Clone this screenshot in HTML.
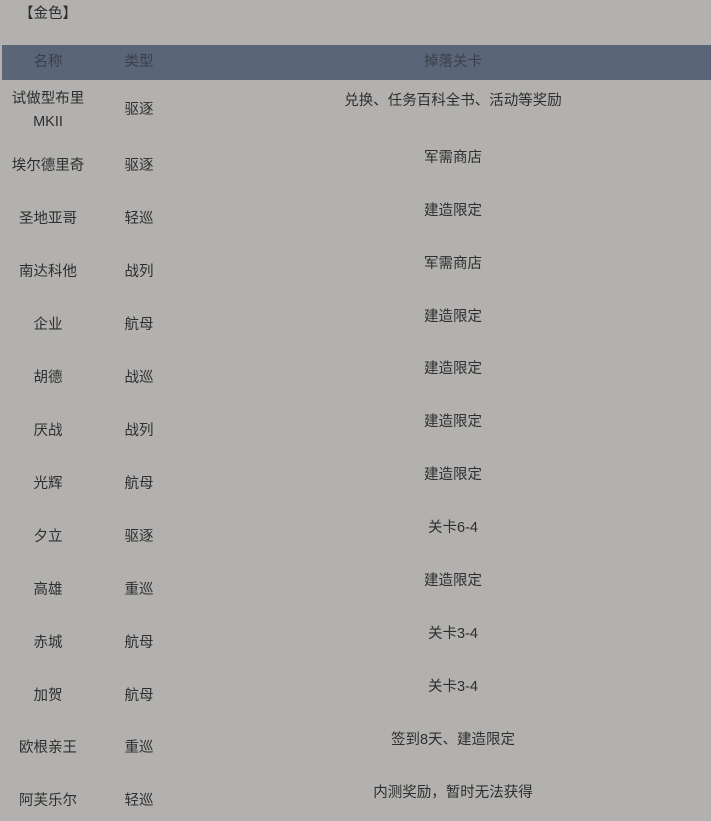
<!DOCTYPE html>
<html><head><meta charset="utf-8"><style>
body{margin:0;width:711px;height:821px;background:#b3b1af;overflow:hidden;font-family:"Liberation Sans","Noto Sans CJK SC",sans-serif;font-size:14.5px;color:#2e2e2e;position:relative}
.t{position:absolute;white-space:nowrap;transform:translate(-50%,-50%);line-height:1}
.hd{position:absolute;left:2px;top:45px;width:709px;height:35px;background:#5a6577}
.h{color:#3a414c}
</style></head><body>
<div class="t" style="left:48px;top:14px">【金色】</div>
<div class="hd"></div>
<div class="t h" style="left:48px;top:62px">名称</div>
<div class="t h" style="left:139px;top:62px">类型</div>
<div class="t h" style="left:453px;top:62px">掉落关卡</div>

<div class="t" style="left:48px;top:99px">试做型布里</div>
<div class="t" style="left:48px;top:122px">MKII</div>
<div class="t" style="left:139px;top:110px">驱逐</div>
<div class="t" style="left:453px;top:101px">兑换、任务百科全书、活动等奖励</div>

<div class="t" style="left:48px;top:166px">埃尔德里奇</div><div class="t" style="left:139px;top:166px">驱逐</div><div class="t" style="left:453px;top:158px">军需商店</div>
<div class="t" style="left:48px;top:219px">圣地亚哥</div><div class="t" style="left:139px;top:219px">轻巡</div><div class="t" style="left:453px;top:211px">建造限定</div>
<div class="t" style="left:48px;top:272px">南达科他</div><div class="t" style="left:139px;top:272px">战列</div><div class="t" style="left:453px;top:264px">军需商店</div>
<div class="t" style="left:48px;top:325px">企业</div><div class="t" style="left:139px;top:325px">航母</div><div class="t" style="left:453px;top:317px">建造限定</div>
<div class="t" style="left:48px;top:378px">胡德</div><div class="t" style="left:139px;top:378px">战巡</div><div class="t" style="left:453px;top:369px">建造限定</div>
<div class="t" style="left:48px;top:431px">厌战</div><div class="t" style="left:139px;top:431px">战列</div><div class="t" style="left:453px;top:422px">建造限定</div>
<div class="t" style="left:48px;top:484px">光辉</div><div class="t" style="left:139px;top:484px">航母</div><div class="t" style="left:453px;top:475px">建造限定</div>
<div class="t" style="left:48px;top:537px">夕立</div><div class="t" style="left:139px;top:537px">驱逐</div><div class="t" style="left:453px;top:528px">关卡6-4</div>
<div class="t" style="left:48px;top:590px">高雄</div><div class="t" style="left:139px;top:590px">重巡</div><div class="t" style="left:453px;top:581px">建造限定</div>
<div class="t" style="left:48px;top:643px">赤城</div><div class="t" style="left:139px;top:643px">航母</div><div class="t" style="left:453px;top:634px">关卡3-4</div>
<div class="t" style="left:48px;top:696px">加贺</div><div class="t" style="left:139px;top:696px">航母</div><div class="t" style="left:453px;top:687px">关卡3-4</div>
<div class="t" style="left:48px;top:748px">欧根亲王</div><div class="t" style="left:139px;top:748px">重巡</div><div class="t" style="left:453px;top:740px">签到8天、建造限定</div>
<div class="t" style="left:48px;top:801px">阿芙乐尔</div><div class="t" style="left:139px;top:801px">轻巡</div><div class="t" style="left:453px;top:793px">内测奖励，暂时无法获得</div>
</body></html>
